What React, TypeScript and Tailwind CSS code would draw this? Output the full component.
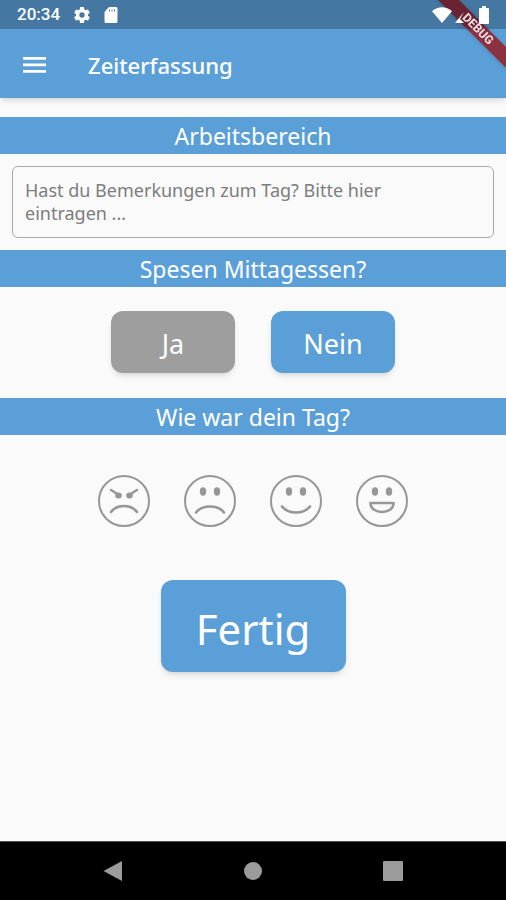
import { useState } from "react";
import type { ReactNode } from "react";

function StatusBar() {
  return (
    <div className="flex h-[29px] items-center justify-between bg-black/25 pl-[17px] pr-4 pt-px text-white">
      <div className="flex items-center gap-3">
        <span className="font-['Roboto',sans-serif] text-[17px] font-medium">20:34</span>
        <svg viewBox="0 0 24 24" className="size-5" fill="currentColor" aria-hidden="true">
          <path d="M19.14 12.94c.04-.3.06-.61.06-.94s-.02-.64-.07-.94l2.03-1.58a.49.49 0 0 0 .12-.61l-1.92-3.32a.49.49 0 0 0-.59-.22l-2.39.96a7 7 0 0 0-1.62-.94l-.36-2.54a.48.48 0 0 0-.48-.41h-3.84a.47.47 0 0 0-.47.41l-.36 2.54c-.59.24-1.13.57-1.62.94l-2.39-.96a.48.48 0 0 0-.59.22L2.74 8.87a.48.48 0 0 0 .12.61l2.03 1.58a6 6 0 0 0-.02 1.88l-2.03 1.58a.49.49 0 0 0-.12.61l1.92 3.32c.12.22.37.29.59.22l2.39-.96c.5.38 1.03.7 1.62.94l.36 2.54c.05.24.24.41.48.41h3.84c.24 0 .44-.17.47-.41l.36-2.54a7 7 0 0 0 1.62-.94l2.39.96c.22.08.47 0 .59-.22l1.92-3.32a.48.48 0 0 0-.12-.61zM12 15.2a3.2 3.2 0 1 1 0-6.4 3.2 3.2 0 0 1 0 6.4z" />
        </svg>
        <svg viewBox="0 0 14 16" className="h-4 w-3.5" fill="currentColor" aria-hidden="true">
          <path
            fillRule="evenodd"
            d="M5 0h7a1.500 1.500 0 0 1 1.500 1.500v13A1.500 1.500 0 0 1 12 16H2a1.500 1.500 0 0 1-1.500-1.500V5zM5 2.500v2h1v-2zM7.500 2.500v2h1v-2zM10 2.500v2h1v-2z"
          />
        </svg>
      </div>
      <div className="flex items-center gap-0.5">
        <svg viewBox="0 0 20 16" className="relative z-20 h-4 w-5" fill="currentColor" aria-hidden="true">
          <path d="M0 4.200C6-1 14-1 20 4.200L10 16z" />
        </svg>
        <svg viewBox="0 0 16 16" className="relative z-20 size-4" fill="currentColor" aria-hidden="true">
          <path d="M10 5L6 12l4 4H1z" />
        </svg>
        <svg viewBox="0 0 12 18" className="relative z-20 ml-1.5 h-[18px] w-3" fill="currentColor" aria-hidden="true">
          <path d="M4 0h4v2h2a1 1 0 0 1 1 1v14a1 1 0 0 1-1 1H2a1 1 0 0 1-1-1V3a1 1 0 0 1 1-1h2z" />
        </svg>
      </div>
    </div>
  );
}

function DebugBanner() {
  return (
    <svg viewBox="0 0 80 80" className="absolute right-0 top-0 z-10 size-20 drop-shadow-sm" aria-hidden="true">
      <defs>
        <linearGradient id="ribbon" x1="0" y1="0" x2="0" y2="1">
          <stop offset="0.38" stopColor="#6a2333" />
          <stop offset="0.46" stopColor="#8d3140" />
        </linearGradient>
      </defs>
      <path d="M12 0h21l47 47v21z" fill="url(#ribbon)" />
      <text
        x="0"
        y="4"
        textAnchor="middle"
        transform="translate(52 29) rotate(45)"
        fill="#f3e3e6"
        className="font-['Roboto',sans-serif] text-xs font-bold"
      >
        DEBUG
      </text>
    </svg>
  );
}

function SectionTitle({ children }: { children: ReactNode }) {
  return (
    <h2 className="bg-[#5b9fd8] pt-px text-center text-[23px] leading-9 text-white">{children}</h2>
  );
}

const faces = [
  {
    label: "Wütend",
    drawing: (
      <>
        <path d="M13 15l8 5M39 15l-8 5M13 37c6-8 20-8 26 0" fill="none" strokeWidth="2.600" strokeLinecap="round" />
        <ellipse cx="20.500" cy="20.500" rx="3.300" ry="3" fill="currentColor" stroke="none" />
        <ellipse cx="31.500" cy="20.500" rx="3.300" ry="3" fill="currentColor" stroke="none" />
      </>
    ),
  },
  {
    label: "Traurig",
    drawing: (
      <>
        <ellipse cx="19" cy="16.500" rx="3.200" ry="4.200" fill="currentColor" stroke="none" />
        <ellipse cx="33" cy="16.500" rx="3.200" ry="4.200" fill="currentColor" stroke="none" />
        <path d="M12 37.500c6-8 22-8 28 0" fill="none" strokeWidth="2.600" strokeLinecap="round" />
      </>
    ),
  },
  {
    label: "Zufrieden",
    drawing: (
      <>
        <ellipse cx="19" cy="16.500" rx="3.200" ry="4.200" fill="currentColor" stroke="none" />
        <ellipse cx="33" cy="16.500" rx="3.200" ry="4.200" fill="currentColor" stroke="none" />
        <path d="M12 31.500c7 8 21 8 28 0" fill="none" strokeWidth="2.600" strokeLinecap="round" />
      </>
    ),
  },
  {
    label: "Glücklich",
    drawing: (
      <>
        <ellipse cx="19" cy="16.500" rx="3.200" ry="4.200" fill="currentColor" stroke="none" />
        <ellipse cx="33" cy="16.500" rx="3.200" ry="4.200" fill="currentColor" stroke="none" />
        <path d="M14.500 28h23c0 12-23 12-23 0z" fill="none" strokeWidth="2.600" strokeLinejoin="round" />
      </>
    ),
  },
];

export default function App() {
  const [lunch, setLunch] = useState("Nein");
  const [mood, setMood] = useState("");

  return (
    <div className="flex min-h-screen flex-col bg-[#fafafa] font-['Noto_Sans',sans-serif]">
      <header className="relative bg-[#5b9fd8] text-white shadow-md">
        <StatusBar />
        <div className="flex h-[69px] items-center gap-10 px-5 pt-1">
          <button type="button" aria-label="Menü">
            <svg viewBox="0 0 28 28" className="size-7" fill="currentColor" aria-hidden="true">
              <path d="M3 5h23v2.700H3zM3 11.500h23v2.700H3zM3 18h23v2.700H3z" />
            </svg>
          </button>
          <h1 className="text-[22px] font-medium">Zeiterfassung</h1>
        </div>
        <DebugBanner />
      </header>

      <main className="flex-1 pt-[19px]">
        <SectionTitle>Arbeitsbereich</SectionTitle>
        <div className="px-3 py-3">
          <textarea
            rows={2}
            aria-label="Bemerkungen"
            placeholder="Hast du Bemerkungen zum Tag? Bitte hier eintragen ..."
            className="block h-[72px] w-full resize-none rounded-md border border-[#a8a8a8] py-3 pl-3 pr-16 text-lg leading-[23px] placeholder:text-[#7d7d7d]"
          />
        </div>

        <SectionTitle>Spesen Mittagessen?</SectionTitle>
        <div className="flex justify-center gap-9 pb-[25px] pt-6">
          {["Ja", "Nein"].map((answer) => (
            <button
              key={answer}
              type="button"
              aria-pressed={lunch === answer}
              onClick={() => setLunch(answer)}
              className={`h-[62px] w-[124px] rounded-xl pt-1 text-[27px] text-white shadow-md ${
                lunch === answer ? "bg-[#5b9fd8]" : "bg-[#9e9e9e]"
              }`}
            >
              {answer}
            </button>
          ))}
        </div>

        <SectionTitle>Wie war dein Tag?</SectionTitle>
        <div className="flex justify-center gap-[34px] pb-[53px] pt-10">
          {faces.map((face) => (
            <button
              key={face.label}
              type="button"
              aria-label={face.label}
              aria-pressed={mood === face.label}
              onClick={() => setMood(face.label)}
              className={mood === face.label ? "text-[#5b9fd8]" : "text-[#979797]"}
            >
              <svg viewBox="0 0 52 52" className="size-[52px]" stroke="currentColor" aria-hidden="true">
                <circle cx="26" cy="26" r="25" fill="none" strokeWidth="2" />
                {face.drawing}
              </svg>
            </button>
          ))}
        </div>

        <div className="flex justify-center">
          <button
            type="button"
            className="h-[92px] w-[185px] rounded-xl bg-[#5b9fd8] pt-1 text-[42px] text-white shadow-md"
          >
            Fertig
          </button>
        </div>
      </main>

      <nav className="flex h-[59px] items-center justify-center gap-30 border-t border-[#555] bg-black text-[#9b9b9b]">
        <button type="button" aria-label="Zurück">
          <svg viewBox="0 0 20 20" className="size-5" fill="currentColor" aria-hidden="true">
            <path d="M0.500 10L19 0v20z" />
          </svg>
        </button>
        <button type="button" aria-label="Startseite">
          <svg viewBox="0 0 20 20" className="size-5" fill="currentColor" aria-hidden="true">
            <circle cx="10" cy="10" r="9" />
          </svg>
        </button>
        <button type="button" aria-label="Letzte Apps">
          <svg viewBox="0 0 20 20" className="size-5" fill="currentColor" aria-hidden="true">
            <rect width="20" height="20" rx="1" />
          </svg>
        </button>
      </nav>
    </div>
  );
}
